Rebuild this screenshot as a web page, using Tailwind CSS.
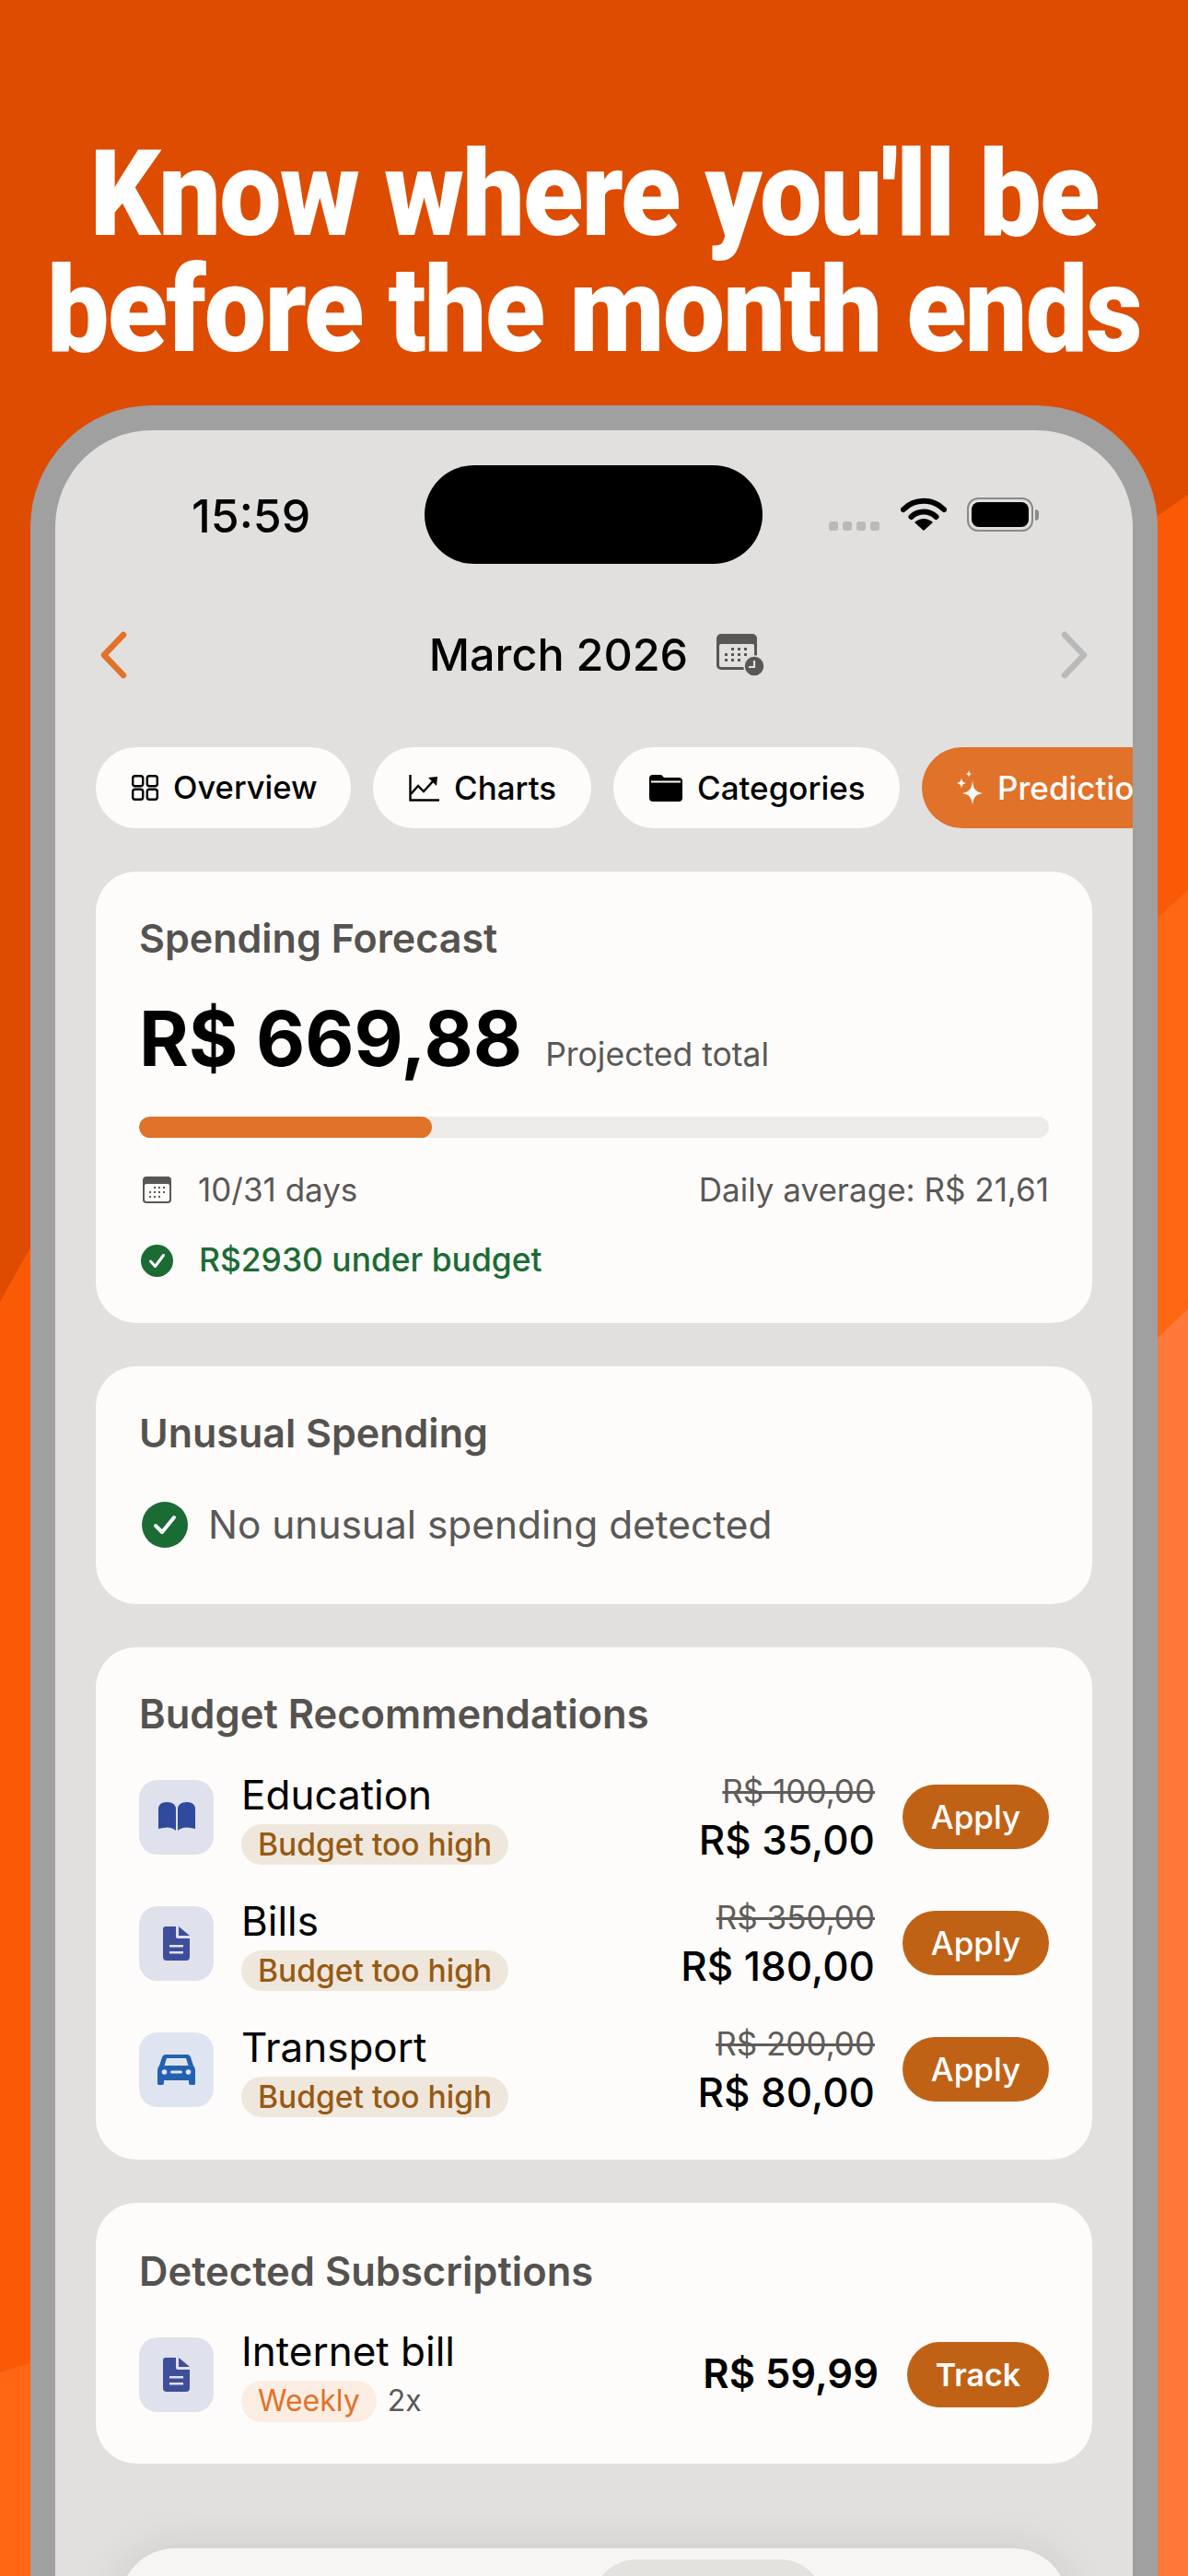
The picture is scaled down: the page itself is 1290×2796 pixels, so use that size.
<!DOCTYPE html>
<html lang="en">
  <head>
    <meta charset="UTF-8" />
    <meta name="viewport" content="width=device-width, initial-scale=1.0" />
    <title>Predictions</title>
    <script src="https://cdn.jsdelivr.net/npm/@tailwindcss/browser@4"></script>
  </head>
  <body class="bg-[#dd4c00]">
    <div class="relative w-[1290px] h-[2796px] overflow-hidden bg-[#dd4c00] [font-family:Inter,sans-serif]">
      <!-- background bands -->
      <svg class="absolute inset-0" width="1290" height="2796" viewBox="0 0 1290 2796">
        <polygon points="0,1413 33,1354 1257,560 1290,537 1290,2796 0,2796" fill="#fa5a05" />
        <polygon points="0,2575 32,2565 1257,996 1290,966 1290,2796 0,2796" fill="#ff6714" />
        <polygon points="1257,1452 1290,1421 1290,2796 1257,2796" fill="#ff7a3a" />
      </svg>

      <div class="relative">
        <h1 class="pt-[148px] text-center text-white text-[129px] leading-[126px] tracking-[-2px] scale-x-[0.93] font-black [font-family:Roboto,sans-serif]">
          Know where you'll be<br />before the month ends
        </h1>

        <!-- phone -->
        <div class="mt-[40px] mx-[33px] h-[2400px] rounded-t-[132px] bg-[#a0a0a0] px-[27px] pt-[27px] overflow-hidden">
          <div class="h-full rounded-t-[105px] bg-[#e1e0de] overflow-hidden">
            <!-- status bar -->
            <div class="flex items-center pt-[38px] h-[145px]">
              <div class="w-[401px] pl-[148px] pt-[2px] text-[50px] leading-[56px] font-medium text-black">15:59</div>
              <div class="w-[367px] h-[107px] rounded-full bg-black"></div>
              <div class="flex items-end pl-[72px]">
                <div class="flex gap-[5px] mb-[1px]">
                  <span class="w-[10px] h-[10px] rounded-[3px] bg-[#b9b9b9]"></span>
                  <span class="w-[10px] h-[10px] rounded-[3px] bg-[#b9b9b9]"></span>
                  <span class="w-[10px] h-[10px] rounded-[3px] bg-[#b9b9b9]"></span>
                  <span class="w-[10px] h-[10px] rounded-[3px] bg-[#b9b9b9]"></span>
                </div>
                <svg class="ml-[23px]" width="50" height="37" viewBox="0 0 50 37">
                  <path d="M3 13 A31 31 0 0 1 47 13" fill="none" stroke="#000" stroke-width="6" stroke-linecap="round" />
                  <path d="M11.5 21 A19.5 19.5 0 0 1 38.5 21" fill="none" stroke="#000" stroke-width="6" stroke-linecap="round" />
                  <path d="M25 36 L15 27 Q25 19 35 27 Z" fill="#000" />
                </svg>
                <div class="ml-[22px] flex items-center">
                  <div class="w-[72px] h-[37px] rounded-[12px] border-[2px] border-[#8a8a8a] p-[3px]">
                    <div class="w-full h-full rounded-[8px] bg-black"></div>
                  </div>
                  <div class="w-[4px] h-[12px] ml-[2px] rounded-r-[4px] bg-[#8a8a8a]"></div>
                </div>
              </div>
            </div>

            <!-- month header -->
            <div class="flex items-center justify-between h-[60px] mt-[69px] px-[48px]">
              <svg width="30" height="52" viewBox="0 0 30 52"><path d="M26 4 L5 26 L26 48" fill="none" stroke="#e0722a" stroke-width="6.5" stroke-linecap="round" stroke-linejoin="round" /></svg>
              <div class="flex items-center gap-[31px] ml-[6px]">
                <span class="text-[48.5px] leading-[60px] font-medium text-black">March 2026</span>
                <svg width="52" height="46" viewBox="0 0 52 46">
                  <rect x="0" y="0" width="44" height="39" rx="5" fill="#5a5654" />
                  <rect x="3" y="11" width="38" height="25" rx="2" fill="#e1e0de" />
                  <g fill="#5a5654">
                    <rect x="16" y="15" width="3" height="3" /><rect x="23" y="15" width="3" height="3" /><rect x="30" y="15" width="3" height="3" />
                    <rect x="9" y="21" width="3" height="3" /><rect x="16" y="21" width="3" height="3" /><rect x="23" y="21" width="3" height="3" /><rect x="30" y="21" width="3" height="3" />
                    <rect x="9" y="27" width="3" height="3" /><rect x="16" y="27" width="3" height="3" /><rect x="23" y="27" width="3" height="3" />
                  </g>
                  <circle cx="41" cy="35" r="11" fill="#5a5654" stroke="#e1e0de" stroke-width="1.5" />
                  <path d="M41 29 V36 H35" fill="none" stroke="#e1e0de" stroke-width="2.2" />
                </svg>
              </div>
              <svg width="30" height="52" viewBox="0 0 30 52"><path d="M4 4 L25 26 L4 48" fill="none" stroke="#b9b9b9" stroke-width="6.5" stroke-linecap="round" stroke-linejoin="round" /></svg>
            </div>

            <!-- tabs -->
            <div class="flex gap-[24px] mt-[70px] pl-[44px] overflow-hidden">
              <div class="shrink-0 flex items-center gap-[16px] h-[88px] w-[277px] pl-[39px] rounded-[44px] bg-[#fdfcfa] text-[34.5px] font-medium text-black">
                <svg width="29" height="28" viewBox="0 0 29 28" fill="none" stroke="#000" stroke-width="2.4">
                  <rect x="1.2" y="1.2" width="11" height="11" rx="2.5" /><rect x="16.8" y="1.2" width="11" height="11" rx="2.5" />
                  <rect x="1.2" y="15.8" width="11" height="11" rx="2.5" /><rect x="16.8" y="15.8" width="11" height="11" rx="2.5" />
                </svg>
                Overview
              </div>
              <div class="shrink-0 flex items-center gap-[16px] h-[88px] w-[237px] pl-[39px] rounded-[44px] bg-[#fdfcfa] text-[35px] font-medium text-black">
                <svg width="33" height="29" viewBox="0 0 33 29" fill="none" stroke="#000" stroke-width="2.4">
                  <path d="M1.5 0 V27.5 H33" />
                  <path d="M2 21 L10 12 L16 18 L27 6" />
                  <path d="M21 3 L31 2 L30 12 Z" fill="#000" stroke="none" />
                </svg>
                Charts
              </div>
              <div class="shrink-0 flex items-center gap-[16px] h-[88px] w-[311px] pl-[39px] rounded-[44px] bg-[#fdfcfa] text-[35px] font-medium text-black">
                <svg width="36" height="29" viewBox="0 0 36 29">
                  <path d="M0 4 Q0 0 4 0 H12 Q14 0 15 2 L16 3 H32 Q36 3 36 7 V25 Q36 29 32 29 H4 Q0 29 0 25 Z" fill="#000" />
                  <rect x="2" y="6.5" width="32" height="2" fill="#fdfcfa" />
                </svg>
                Categories
              </div>
              <div class="shrink-0 flex items-center gap-[16px] h-[88px] w-[320px] pl-[38px] rounded-[44px] bg-[#e0722a] text-[35px] font-medium text-white">
                <svg width="28" height="38" viewBox="0 0 28 38" fill="#fff">
                  <path d="M17 11 C18 21 20 23 28 25 C20 27 18 29 17 38 C16 29 14 27 6 25 C14 23 16 21 17 11 Z" />
                  <path d="M5 8 C5.5 12 6.5 13 10 14 C6.5 15 5.5 16 5 20 C4.5 16 3.5 15 0 14 C3.5 13 4.5 12 5 8 Z" />
                  <path d="M13 0 C13.3 2.5 14 3.2 16 4 C14 4.8 13.3 5.5 13 8 C12.7 5.5 12 4.8 10 4 C12 3.2 12.7 2.5 13 0 Z" />
                </svg>
                Predictions
              </div>
            </div>

            <div class="flex flex-col gap-[47px] mt-[47px] mx-[44px]">
              <!-- forecast -->
              <div class="rounded-[44px] bg-[#fdfcfa] px-[47px] pt-[47px] pb-[48px]">
                <h2 class="text-[43px] leading-[50px] font-semibold text-[#55524f]">Spending Forecast</h2>
                <div class="flex items-baseline gap-[25px] mt-[35px] mb-[-1px]">
                  <span class="text-[82px] leading-[100px] font-bold text-black">R$ 669,88</span>
                  <span class="text-[35.5px] text-[#5a5856]">Projected total</span>
                </div>
                <div class="mt-[35px] h-[23px] rounded-full bg-[#ecebe9] overflow-hidden">
                  <div class="h-full w-[318px] rounded-full bg-[#e0722a]"></div>
                </div>
                <div class="flex items-center justify-between h-[40px] mt-[36px] text-[35px] text-[#5a5856]">
                  <div class="flex items-center gap-[29px] pl-[4px]">
                    <svg width="31" height="29" viewBox="0 0 31 29">
                      <rect width="31" height="29" rx="4" fill="#5a5654" />
                      <rect x="2" y="8" width="27" height="19" rx="2" fill="#fdfcfa" />
                      <g fill="#5a5654">
                        <rect x="12" y="11" width="2" height="2" /><rect x="17" y="11" width="2" height="2" /><rect x="22" y="11" width="2" height="2" />
                        <rect x="7" y="16" width="2" height="2" /><rect x="12" y="16" width="2" height="2" /><rect x="17" y="16" width="2" height="2" /><rect x="22" y="16" width="2" height="2" />
                        <rect x="7" y="21" width="2" height="2" /><rect x="12" y="21" width="2" height="2" /><rect x="17" y="21" width="2" height="2" />
                      </g>
                    </svg>
                    <span>10/31 days</span>
                  </div>
                  <span>Daily average: R$ 21,61</span>
                </div>
                <div class="flex items-center gap-[28px] h-[40px] mt-[37px] pl-[2px] text-[35.4px] font-medium text-[#1b6b35]">
                  <svg width="35" height="35" viewBox="0 0 35 35">
                    <circle cx="17.5" cy="17.5" r="17.5" fill="#1b6b35" />
                    <path d="M10.5 18 L15.5 23.5 L24.5 11.5" fill="none" stroke="#fff" stroke-width="3" stroke-linecap="round" stroke-linejoin="round" />
                  </svg>
                  <span>R$2930 under budget</span>
                </div>
              </div>

              <!-- unusual -->
              <div class="rounded-[44px] bg-[#fdfcfa] px-[47px] pt-[47px] pb-[55px]">
                <h2 class="text-[43px] leading-[50px] font-semibold text-[#55524f]">Unusual Spending</h2>
                <div class="flex items-center gap-[22px] h-[60px] mt-[45px] mb-[1px] pl-[3px] text-[42.4px] text-[#5a5856]">
                  <svg width="50" height="50" viewBox="0 0 50 50">
                    <circle cx="25" cy="25" r="25" fill="#1b6b35" />
                    <path d="M15 26 L22 33 L35 17" fill="none" stroke="#fff" stroke-width="4" stroke-linecap="round" stroke-linejoin="round" />
                  </svg>
                  <span>No unusual spending detected</span>
                </div>
              </div>

              <!-- budget recommendations -->
              <div class="rounded-[44px] bg-[#fdfcfa] px-[47px] pt-[47px] pb-[46px]">
                <h2 class="text-[43.5px] leading-[50px] font-semibold text-[#55524f]">Budget Recommendations</h2>
                <div class="flex flex-col gap-[33px] mt-[35px]">
                  <div class="flex items-center h-[104px]">
                    <div class="flex items-center justify-center w-[81px] h-[81px] rounded-[20px] bg-[#dfe1ec]">
                      <svg width="40" height="32" viewBox="0 0 40 32" fill="#2f4a9c">
                        <path d="M0 8 Q0 0 9 0 Q19 0 19 8 V31 Q13 25 0 29 Z" />
                        <path d="M40 8 Q40 0 31 0 Q21 0 21 8 V31 Q27 25 40 29 Z" />
                      </svg>
                    </div>
                    <div class="ml-[30px] flex-1 pt-[3px]">
                      <div class="text-[44px] leading-[50px] text-black">Education</div>
                      <span class="inline-flex items-center h-[44px] mt-[7px] px-[18px] rounded-full bg-[#f0e7dc] text-[33.6px] font-medium text-[#965a14]">Budget too high</span>
                    </div>
                    <div class="text-right pt-[3px]">
                      <div class="text-[35px] leading-[44px] mb-[3px] text-[#5f5c59] line-through">R$ 100,00</div>
                      <div class="text-[44px] leading-[57px] font-medium text-black">R$ 35,00</div>
                    </div>
                    <div class="ml-[30px] flex items-center justify-center w-[159px] h-[70px] rounded-full bg-[#c06216] text-[35px] font-medium text-white">Apply</div>
                  </div>
                  <div class="flex items-center h-[104px]">
                    <div class="flex items-center justify-center w-[81px] h-[81px] rounded-[20px] bg-[#dfe1ec]">
                      <svg width="29" height="37" viewBox="0 0 29 37" fill="#3f4e9a">
                        <path d="M3 0 H14 V11 Q14 13 16 13 H29 V33 Q29 37 25 37 H4 Q0 37 0 33 V3 Q0 0 3 0 Z" />
                        <path d="M17 0 L29 10 H17 Z" />
                        <rect x="7" y="20" width="15" height="2.5" fill="#dfe1ec" />
                        <rect x="7" y="27" width="15" height="2.5" fill="#dfe1ec" />
                      </svg>
                    </div>
                    <div class="ml-[30px] flex-1 pt-[3px]">
                      <div class="text-[44px] leading-[50px] text-black">Bills</div>
                      <span class="inline-flex items-center h-[44px] mt-[7px] px-[18px] rounded-full bg-[#f0e7dc] text-[33.6px] font-medium text-[#965a14]">Budget too high</span>
                    </div>
                    <div class="text-right pt-[3px]">
                      <div class="text-[35px] leading-[44px] mb-[3px] text-[#5f5c59] line-through">R$ 350,00</div>
                      <div class="text-[44px] leading-[57px] font-medium text-black">R$ 180,00</div>
                    </div>
                    <div class="ml-[30px] flex items-center justify-center w-[159px] h-[70px] rounded-full bg-[#c06216] text-[35px] font-medium text-white">Apply</div>
                  </div>
                  <div class="flex items-center h-[104px]">
                    <div class="flex items-center justify-center w-[81px] h-[81px] rounded-[20px] bg-[#dfe5f0]">
                      <svg width="41" height="33" viewBox="0 0 41 33" fill="#2361b0">
                        <path fill-rule="evenodd" d="M9 0 H32 Q35 0 36 3 L39 12 Q41 14 41 17 V32 Q41 33 39 33 H36 Q34 33 34 31 V28 H7 V31 Q7 33 5 33 H2 Q0 33 0 32 V17 Q0 14 2 12 L5 3 Q6 0 9 0 Z M10 4 L7.5 12 H33.5 L31 4 Z" />
                        <circle cx="7.5" cy="19" r="2.8" fill="#dfe5f0" /><circle cx="33.5" cy="19" r="2.8" fill="#dfe5f0" />
                        <rect x="14" y="17.5" width="13" height="3" rx="1.5" fill="#dfe5f0" />
                      </svg>
                    </div>
                    <div class="ml-[30px] flex-1 pt-[3px]">
                      <div class="text-[44px] leading-[50px] text-black">Transport</div>
                      <span class="inline-flex items-center h-[44px] mt-[7px] px-[18px] rounded-full bg-[#f0e7dc] text-[33.6px] font-medium text-[#965a14]">Budget too high</span>
                    </div>
                    <div class="text-right pt-[3px]">
                      <div class="text-[35px] leading-[44px] mb-[3px] text-[#5f5c59] line-through">R$ 200,00</div>
                      <div class="text-[44px] leading-[57px] font-medium text-black">R$ 80,00</div>
                    </div>
                    <div class="ml-[30px] flex items-center justify-center w-[159px] h-[70px] rounded-full bg-[#c06216] text-[35px] font-medium text-white">Apply</div>
                  </div>
                </div>
              </div>

              <!-- subscriptions -->
              <div class="rounded-[44px] bg-[#fdfcfa] px-[47px] pt-[49px] pb-[44px]">
                <h2 class="text-[43.5px] leading-[50px] font-semibold text-[#55524f]">Detected Subscriptions</h2>
                <div class="flex items-center mt-[34px]">
                  <div class="flex items-center justify-center w-[81px] h-[81px] rounded-[20px] bg-[#dfe1ec]">
                    <svg width="29" height="37" viewBox="0 0 29 37" fill="#3f4e9a">
                      <path d="M3 0 H14 V11 Q14 13 16 13 H29 V33 Q29 37 25 37 H4 Q0 37 0 33 V3 Q0 0 3 0 Z" />
                      <path d="M17 0 L29 10 H17 Z" />
                      <rect x="7" y="20" width="15" height="2.5" fill="#dfe1ec" />
                      <rect x="7" y="27" width="15" height="2.5" fill="#dfe1ec" />
                    </svg>
                  </div>
                  <div class="ml-[30px] flex-1 pt-[3px]">
                    <div class="text-[44px] leading-[50px] text-black">Internet bill</div>
                    <div class="flex items-center gap-[12px] mt-[5px]">
                      <span class="inline-flex items-center h-[45px] px-[18px] rounded-full bg-[#fbede2] text-[32px] text-[#e0722a]">Weekly</span>
                      <span class="text-[32px] text-[#5a5856]">2x</span>
                    </div>
                  </div>
                  <div class="text-[43.5px] font-semibold text-black">R$ 59,99</div>
                  <div class="ml-[31px] flex items-center justify-center w-[154px] h-[71px] rounded-full bg-[#c06216] text-[34px] font-semibold text-white">Track</div>
                </div>
              </div>
            </div>

            <!-- bottom nav -->
            <div class="mt-[92px] mx-[70px] h-[120px] rounded-[70px] bg-[#f6f5f3] pt-[12px] pl-[513px] shadow-[0_0_50px_rgba(0,0,0,0.1)]">
              <div class="w-[252px] h-[100px] rounded-[48px] bg-[#e4e2df]"></div>
            </div>
          </div>
        </div>
      </div>
    </div>
  </body>
</html>
